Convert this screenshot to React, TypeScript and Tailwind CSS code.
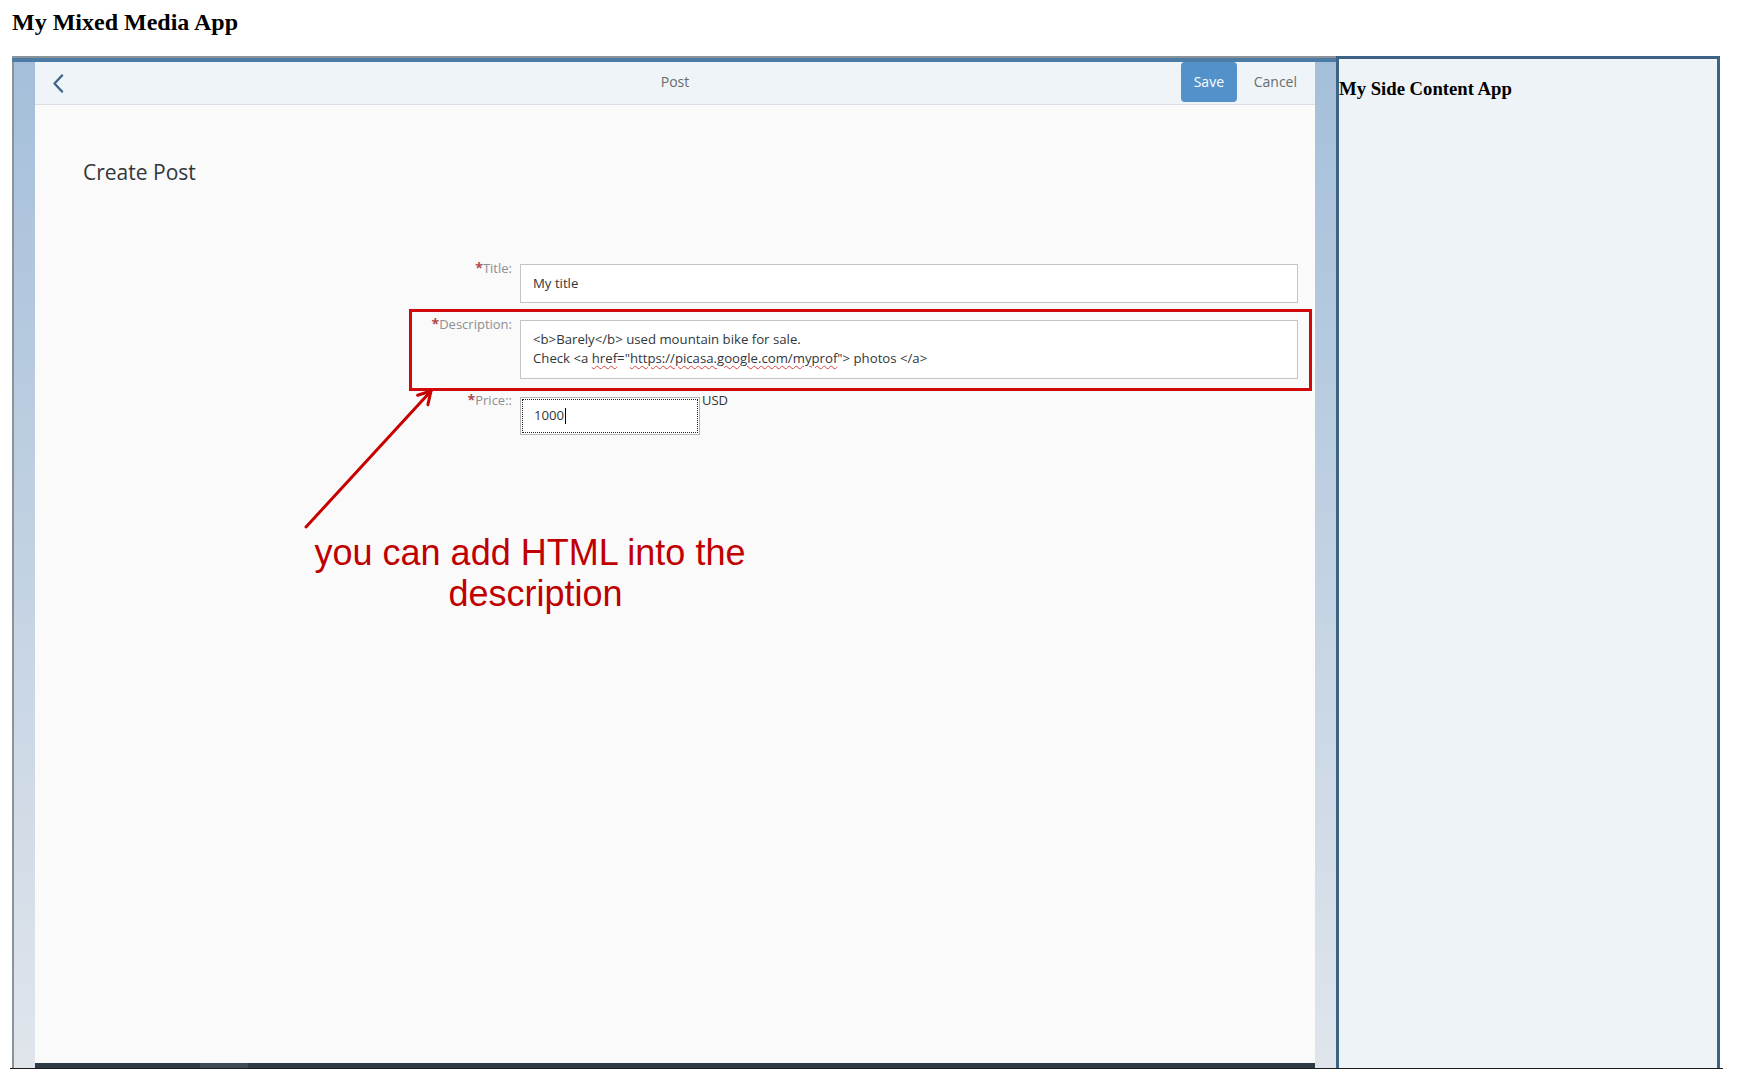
const label = "w-[477px] text-right text-[13px] leading-[18px] text-[#8d8f91]";

function Req({ text }: { text: string }) {
  return (
    <div className={label}>
      <span className="text-[14px] font-bold text-[#b04a4a]">*</span>
      {text}
    </div>
  );
}

function MainApp() {
  return (
    <div className="flex w-[1324px] flex-col border-t-2 border-[#8b9298]">
      <div className="h-[4px] bg-[#4c7ba6]" />
      <div className="flex flex-1 border-l-2 border-[#8d9297]">
        <div className="w-[21px] bg-linear-to-b from-[#a5bfda] to-[#e0e5eb]" />

        <div className="flex w-[1280px] flex-col font-['Open_Sans',sans-serif]">
          {/* header bar */}
          <div className="grid h-[43px] grid-cols-[134px_1fr_134px] border-b border-[#d7dee5] bg-[#eff4f9]">
            <div className="flex items-center pl-[17px]">
              <svg width="12" height="19" viewBox="0 0 12 19" fill="none">
                <path
                  d="M10 1.5 L2.5 9.5 L10 17.5"
                  stroke="#41648a"
                  strokeWidth="2.4"
                  strokeLinecap="round"
                  strokeLinejoin="round"
                />
              </svg>
            </div>
            <div className="flex items-center justify-center pb-[3px] text-[14px] text-[#666a6e]">
              Post
            </div>
            <div className="flex items-start justify-end gap-[17px] pr-[18px]">
              <button className="h-[40px] w-[57px] rounded-[4px] bg-[#5291ca] pb-[2px] text-[14px] text-white">
                Save
              </button>
              <button className="h-[40px] pb-[2px] text-[14px] text-[#6a6d70]">Cancel</button>
            </div>
          </div>

          {/* body */}
          <div className="flex-1 bg-[#fafafa]">
            <div className="pl-[48px] pt-[53px] text-[21px] leading-[28px] text-[#32363a]">
              Create Post
            </div>

            <div className="mt-[73px] flex flex-col gap-[12px]">
              <div className="flex items-start">
                <Req text="Title:" />
                <div className="ml-[8px] mt-[5px] flex h-[39px] w-[778px] items-center border border-[#c4c4c4] bg-white pl-[12px] text-[13.2px] text-[#32363a]">
                  My title
                </div>
              </div>

              <div className="flex items-start">
                <Req text="Description:" />
                <div className="ml-[8px] mt-[5px] h-[59px] w-[778px] border border-[#c4c4c4] bg-white pl-[12px] pt-[9px] text-[13.2px] leading-[19px] text-[#32363a]">
                  <div>&lt;b&gt;Barely&lt;/b&gt; used mountain bike for sale.</div>
                  <div>
                    Check &lt;a{" "}
                    <span className="underline decoration-[#e04040] decoration-wavy decoration-1 underline-offset-2">
                      href
                    </span>
                    ="
                    <span className="underline decoration-[#e04040] decoration-wavy decoration-1 underline-offset-2">
                      https://picasa.google.com/myprof
                    </span>
                    "&gt; photos &lt;/a&gt;
                  </div>
                </div>
              </div>

              <div className="flex items-start">
                <Req text="Price::" />
                <div className="ml-[8px] mt-[6px] h-[38px] w-[180px] border border-[#b5b5b5] bg-white p-px">
                  <div className="flex h-full items-center border border-dotted border-[#222] pl-[11px] text-[13.2px] text-[#32363a]">
                    1000
                    <span className="ml-px h-[16px] w-px bg-black" />
                  </div>
                </div>
                <span className="ml-[2px] text-[13px] leading-[18px] text-[#333]">USD</span>
              </div>
            </div>
          </div>

          <div className="flex h-[5px] bg-[#2c3a45]">
            <div className="ml-[165px] w-[48px] bg-[#3e4a55]" />
          </div>
        </div>

        <div className="w-[21px] bg-linear-to-b from-[#a5bfda] to-[#e0e5eb]" />
      </div>
    </div>
  );
}

function SideApp() {
  return (
    <div className="w-[384px] border-[3px] border-b-0 border-[#3d6384] bg-[#eef3f8]">
      <h3 className="pt-[19px] font-['Liberation_Serif',serif] text-[18.7px] font-bold leading-[22px] text-black">
        My Side Content App
      </h3>
    </div>
  );
}

function Annotation() {
  return (
    <>
      <div className="absolute left-[409px] top-[309px] h-[82px] w-[903px] border-[3px] border-[#d00a0a]" />
      <svg
        className="absolute left-[296px] top-[380px]"
        width="150"
        height="160"
        viewBox="296 380 150 160"
        fill="none"
        stroke="#c80000"
        strokeWidth="3"
        strokeLinecap="round"
        strokeLinejoin="round"
      >
        <path d="M306 527 L431 391" />
        <path d="M417.6 395.2 L431 391 L427.9 404.7" />
      </svg>
      <div className="absolute left-[280px] top-[532px] w-[500px] text-center font-['Liberation_Sans',Arial,sans-serif] text-[36px] leading-[41px] text-[#c00000]">
        <div>you can add HTML into the</div>
        <div className="pl-[11px]">description</div>
      </div>
    </>
  );
}

export default function App() {
  return (
    <div className="relative h-[1089px] w-[1743px] overflow-hidden bg-white">
      <h2 className="h-[56px] pl-[12px] pt-[8px] font-['Liberation_Serif',serif] text-[24px] font-bold leading-[28px] text-black">
        My Mixed Media App
      </h2>
      <div className="flex h-[1012px] pl-[12px]">
        <MainApp />
        <SideApp />
      </div>
      <div className="ml-[10px] h-px w-[1713px] bg-[#1b1b1b]" />
      <Annotation />
    </div>
  );
}
